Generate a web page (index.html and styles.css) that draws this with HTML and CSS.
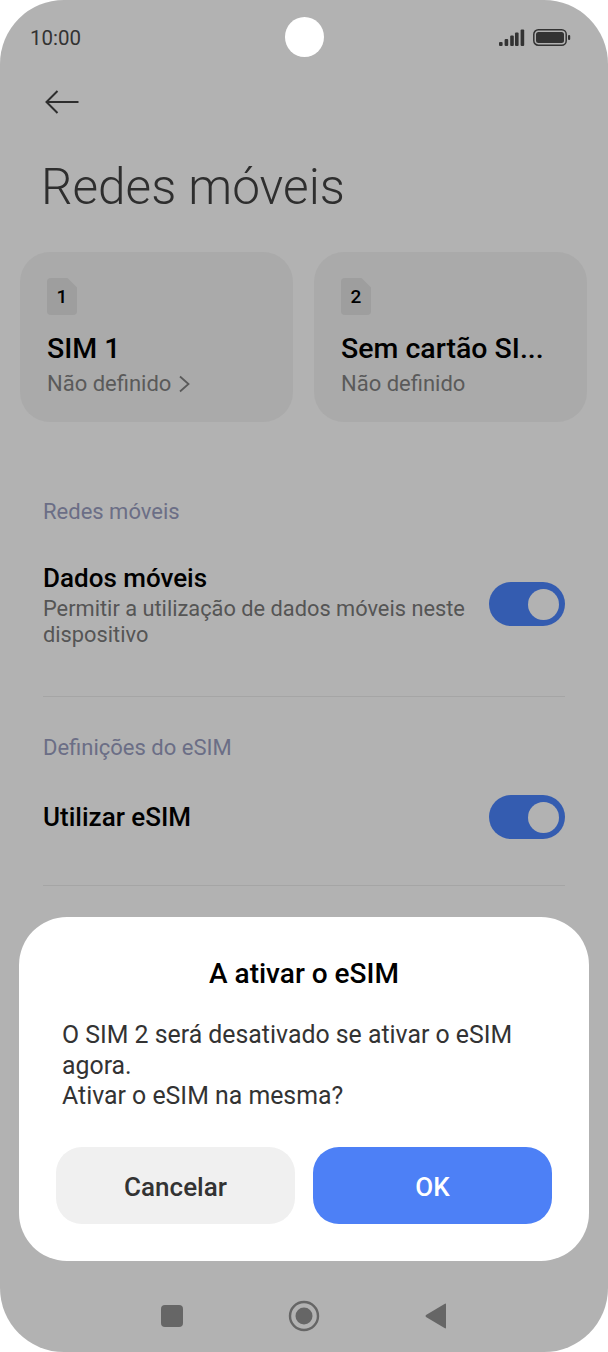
FILE: index.html
```html
<!DOCTYPE html>
<html lang="pt">
<head>
    <meta charset="UTF-8">
    <meta name="viewport" content="width=device-width, initial-scale=1.0">
    <title>Redes móveis</title>
    <link rel="stylesheet" href="styles.css">
</head>
<body>
    <div class="phone">
        <!-- Barra de estado -->
        <div class="status-bar">
            <span class="time">10:00</span>
            <div class="status-icons">
                <svg width="26" height="17" viewBox="0 0 26 17">
                    <rect x="0" y="13" width="3.6" height="4" rx="1" fill="#333"/>
                    <rect x="5.6" y="10" width="3.6" height="7" rx="1" fill="#333"/>
                    <rect x="11.2" y="6.5" width="3.6" height="10.5" rx="1" fill="#333"/>
                    <rect x="16" y="3.5" width="3.6" height="13.5" rx="1" fill="#333"/>
                    <rect x="21.6" y="0.5" width="3.6" height="16.5" rx="1" fill="#333"/>
                </svg>
                <svg width="38" height="17" viewBox="0 0 38 17">
                    <rect x="0.8" y="0.8" width="32.4" height="15.4" rx="4.5" fill="none" stroke="#333" stroke-width="1.5"/>
                    <rect x="3" y="3" width="28" height="11" rx="2.5" fill="#333"/>
                    <rect x="35" y="6" width="2.2" height="5" rx="1" fill="#333"/>
                </svg>
            </div>
        </div>
        <div class="camera"></div>

        <svg class="back" width="34" height="24" viewBox="0 0 34 24">
            <path d="M33.5 12H1.5M12.5 1L1.5 12L12.5 23" fill="none" stroke="#2e2e2e" stroke-width="2"/>
        </svg>

        <h1>Redes móveis</h1>

        <div class="sim-cards">
            <div class="sim-card">
                <div class="sim-icon">1</div>
                <div class="sim-name">SIM 1</div>
                <div class="sim-state">Não definido
                    <svg width="11" height="18" viewBox="0 0 11 18">
                        <path d="M1 1.5L9.5 9L1 16.5" fill="none" stroke="#5a5a5a" stroke-width="1.8"/>
                    </svg>
                </div>
            </div>
            <div class="sim-card">
                <div class="sim-icon">2</div>
                <div class="sim-name">Sem cartão SI...</div>
                <div class="sim-state">Não definido</div>
            </div>
        </div>

        <div class="section-label label-first">Redes móveis</div>
        <div class="row row-data">
            <div class="row-text">
                <div class="row-title">Dados móveis</div>
                <div class="row-sub">Permitir a utilização de dados móveis neste dispositivo</div>
            </div>
            <div class="toggle"><span class="knob"></span></div>
        </div>
        <div class="divider"></div>

        <div class="section-label label-esim">Definições do eSIM</div>
        <div class="row row-esim">
            <div class="row-title">Utilizar eSIM</div>
            <div class="toggle"><span class="knob"></span></div>
        </div>
        <div class="divider divider-esim"></div>

        <!-- Botões de navegação -->
        <div class="nav-bar">
            <svg width="24" height="24" viewBox="0 0 24 24"><rect x="1" y="1" width="22" height="22" rx="4" fill="#666"/></svg>
            <svg width="32" height="32" viewBox="0 0 32 32">
                <circle cx="16" cy="16" r="14" fill="none" stroke="#666" stroke-width="2.4"/>
                <circle cx="16" cy="16" r="8.5" fill="#666"/>
            </svg>
            <svg width="24" height="28" viewBox="0 0 24 28">
                <path d="M22 2.5V25.5Q22 27 20.5 26L2 15Q1 14 2 13L20.5 2Q22 1 22 2.5Z" fill="#666"/>
            </svg>
        </div>

        <!-- Diálogo -->
        <div class="dialog">
            <h2>A ativar o eSIM</h2>
            <p>O SIM 2 será desativado se ativar o eSIM agora.<br>Ativar o eSIM na mesma?</p>
            <div class="dialog-buttons">
                <button class="btn-cancel">Cancelar</button>
                <button class="btn-ok">OK</button>
            </div>
        </div>
    </div>
</body>
</html>
```

FILE: styles.css
```css
html, body {
    margin: 0;
    padding: 0;
    background-color: #ffffff;
}

.phone {
    position: relative;
    display: flex;
    flex-direction: column;
    width: 608px;
    height: 1352px;
    overflow: hidden;
    border-radius: 64px;
    background-color: #b2b2b2;
    font-family: Roboto, "Liberation Sans", sans-serif;
}

/* Barra de estado */
.status-bar {
    display: flex;
    justify-content: space-between;
    align-items: center;
    height: 24px;
    margin-top: 25px;
    padding: 0 37px 0 30px;
}

.time {
    padding-top: 1px;
    font-size: 20.5px;
    color: #333;
}

.status-icons {
    display: flex;
    align-items: center;
    gap: 8px;
}

.status-icons svg {
    display: block;
}

.camera {
    position: absolute;
    top: 17px;
    left: 285px;
    width: 39px;
    height: 40px;
    border-radius: 50%;
    background-color: #ffffff;
}

.back {
    display: block;
    margin: 41px 0 0 45px;
}

h1 {
    margin: 43px 0 0 41px;
    font-size: 49.5px;
    line-height: 60px;
    font-weight: 300;
    color: #2e2e2e;
}

/* Cartões SIM */
.sim-cards {
    display: flex;
    gap: 21px;
    margin: 35px 21px 0 20px;
}

.sim-card {
    flex: 1;
    height: 170px;
    box-sizing: border-box;
    padding: 26px 0 0 27px;
    border-radius: 30px;
    background-color: #aaaaaa;
}

.sim-icon {
    width: 30px;
    height: 37px;
    border-radius: 4px;
    clip-path: polygon(0 0, 68% 0, 100% 26%, 100% 100%, 0 100%);
    background-color: #9e9e9e;
    text-align: center;
    font-size: 19px;
    font-weight: 500;
    line-height: 37px;
    color: #000;
}

.sim-name {
    margin-top: 16px;
    font-size: 28.5px;
    line-height: 36px;
    font-weight: 500;
    color: #000;
}

.sim-state {
    display: flex;
    align-items: center;
    gap: 8px;
    margin-top: 2px;
    font-size: 22px;
    line-height: 30px;
    color: #5a5a5a;
}

/* Linhas de definições */
.section-label {
    margin-left: 43px;
    font-size: 22px;
    line-height: 28px;
    color: #6b6e86;
}

.label-first {
    margin-top: 76px;
}

.label-esim {
    margin-top: 37px;
}

.row {
    display: flex;
    justify-content: space-between;
    align-items: center;
    margin: 0 43px;
}

.row-data {
    margin-top: 34px;
}

.row-esim {
    margin-top: 33px;
}

.row-text {
    width: 430px;
}

.row-title {
    padding-top: 1px;
    font-size: 26px;
    line-height: 35px;
    font-weight: 500;
    color: #000;
}

.row-sub {
    font-size: 21.8px;
    line-height: 26px;
    color: #555;
}

.toggle {
    display: flex;
    justify-content: flex-end;
    align-items: center;
    width: 76px;
    height: 44px;
    box-sizing: border-box;
    padding-right: 6px;
    border-radius: 22px;
    background-color: #345cb0;
}

.knob {
    width: 31px;
    height: 31px;
    border-radius: 50%;
    background-color: #b2b2b2;
}

.divider {
    height: 1px;
    margin: 48px 43px 0 43px;
    background-color: #a5a5a5;
}

.divider-esim {
    margin-top: 46px;
}

/* Botões de navegação */
.nav-bar {
    display: flex;
    justify-content: space-between;
    align-items: center;
    width: 288px;
    margin: auto 0 20px 160px;
}

/* Diálogo */
.dialog {
    position: absolute;
    top: 917px;
    left: 19px;
    width: 570px;
    height: 344px;
    box-sizing: border-box;
    padding: 39px 37px 0 37px;
    border-radius: 48px;
    background-color: #ffffff;
}

h2 {
    margin: 0;
    text-align: center;
    font-size: 28px;
    line-height: 36px;
    font-weight: 500;
    color: #000;
}

.dialog p {
    margin: 28px 0 0 6px;
    font-size: 24.85px;
    line-height: 30.5px;
    color: #333;
}

.dialog-buttons {
    display: flex;
    gap: 18px;
    margin-top: 35px;
}

.dialog-buttons button {
    flex: 1;
    height: 77px;
    padding: 3px 0 0 0;
    border: none;
    border-radius: 26px;
    font-family: inherit;
    font-size: 26px;
    font-weight: 500;
}

.btn-cancel {
    background-color: #f0f0f0;
    color: #333;
}

.btn-ok {
    background-color: #4d80f6;
    color: #ffffff;
}
```
